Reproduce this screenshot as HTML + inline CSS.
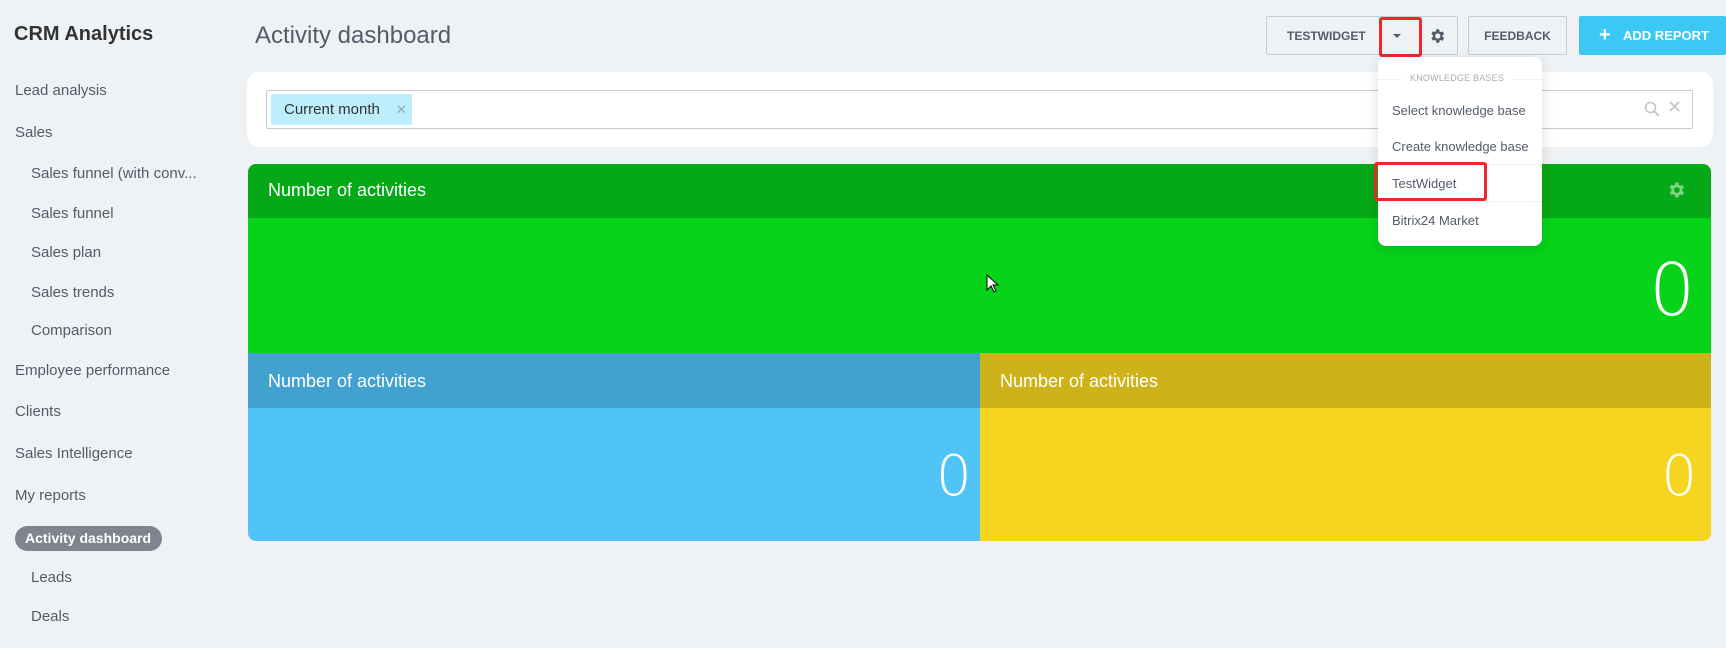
<!DOCTYPE html>
<html><head><meta charset="utf-8"><style>
*{box-sizing:border-box;margin:0;padding:0}
body{width:1726px;height:648px;background:#eef2f4;font-family:"Liberation Sans",sans-serif;position:relative;overflow:hidden;color:#333}
.a{position:absolute}
.nav{position:absolute;left:15px;font-size:15px;color:#535c69;white-space:nowrap}
.sub{left:31px}
.btn{position:absolute;top:16px;height:39px;border:1px solid #c6cdd3;border-radius:2px;font-size:12px;font-weight:bold;color:#535c69;display:flex;align-items:center;justify-content:center}
.item{position:absolute;left:14px;font-size:13px;color:#535c69}
.zero{position:absolute;color:#fff;font-weight:200;font-family:"DejaVu Sans","Liberation Sans",sans-serif}
.hd{position:absolute;color:#fff;font-size:18px}
</style></head><body>
<div class="a" style="left:14px;top:23px;font-size:20px;font-weight:bold;color:#333">CRM Analytics</div>
<div class="nav" style="top:82px">Lead analysis</div>
<div class="nav" style="top:124px">Sales</div>
<div class="nav sub" style="top:165px">Sales funnel (with conv...</div>
<div class="nav sub" style="top:205px">Sales funnel</div>
<div class="nav sub" style="top:244px">Sales plan</div>
<div class="nav sub" style="top:284px">Sales trends</div>
<div class="nav sub" style="top:322px">Comparison</div>
<div class="nav" style="top:362px">Employee performance</div>
<div class="nav" style="top:403px">Clients</div>
<div class="nav" style="top:445px">Sales Intelligence</div>
<div class="nav" style="top:487px">My reports</div>
<div class="a" style="left:15px;top:526px;width:147px;height:25px;border-radius:13px;background:#7f858e;color:#fff;font-weight:bold;font-size:14px;line-height:25px;padding-left:10px;white-space:nowrap">Activity dashboard</div>
<div class="nav sub" style="top:569px">Leads</div>
<div class="nav sub" style="top:608px">Deals</div>

<div class="a" style="left:255px;top:22px;font-size:24px;font-weight:300;color:#535c69">Activity dashboard</div>

<div class="btn" style="left:1266px;width:192px;justify-content:flex-start;padding-left:20px">TESTWIDGET</div>
<div class="a" style="left:1393px;top:34px;width:0;height:0;border-left:4px solid transparent;border-right:4px solid transparent;border-top:4px solid #535c69"></div>
<div class="a" style="left:1379px;top:17px;width:43px;height:40px;border:3px solid #f0262d;border-radius:3px"></div>
<svg class="a" style="left:1428px;top:27px" width="18" height="18" viewBox="0 0 24 24"><path fill="#535c69" d="M19.4 13a7.5 7.5 0 0 0 0-2l2.1-1.6-2-3.5-2.5 1a7 7 0 0 0-1.7-1L15 3h-4l-.4 2.7a7 7 0 0 0-1.7 1l-2.5-1-2 3.5L6.6 11a7.5 7.5 0 0 0 0 2l-2.1 1.6 2 3.5 2.5-1a7 7 0 0 0 1.7 1L11 21h4l.4-2.7a7 7 0 0 0 1.7-1l2.5 1 2-3.5zM13 15.5a3.5 3.5 0 1 1 0-7 3.5 3.5 0 0 1 0 7z"/></svg>
<div class="btn" style="left:1468px;width:99px">FEEDBACK</div>
<div class="btn" style="left:1579px;width:147px;border:none;background:#3bc8f5;color:#fff;font-size:13px;justify-content:flex-start;padding-left:44px">ADD REPORT</div>
<div class="a" style="left:1599px;top:28px;color:#fff;font-size:20px;font-weight:bold;line-height:14px">+</div>

<div class="a" style="left:247px;top:72px;width:1466px;height:75px;background:#fff;border-radius:12px"></div>
<div class="a" style="left:266px;top:90px;width:1427px;height:39px;border:1px solid #c6cdd3;border-radius:2px"></div>
<div class="a" style="left:271px;top:94px;width:141px;height:31px;background:#bdeefb;border-radius:2px;font-size:15px;color:#333;line-height:31px;padding-left:13px">Current month<span style="color:#9aaab2;font-size:13px;margin-left:16px">✕</span></div>
<svg class="a" style="left:1644px;top:101px" width="16" height="16" viewBox="0 0 16 16"><circle cx="6.5" cy="6.5" r="5" stroke="#c0c6cb" stroke-width="1.6" fill="none"/><path d="M10 10l5 5" stroke="#c0c6cb" stroke-width="1.8"/></svg>
<div class="a" style="left:1667px;top:97px;color:#c0c6cb;font-size:18px">✕</div>

<div class="a" style="left:248px;top:164px;width:1463px;height:377px;border-radius:8px;overflow:hidden">
<div class="a" style="left:0;top:0;width:1463px;height:54px;background:#05a816"></div>
<div class="a" style="left:0;top:54px;width:1463px;height:135px;background:#07d31a"></div>
<div class="a" style="left:0;top:189px;width:732px;height:55px;background:#42a2cf"></div>
<div class="a" style="left:0;top:244px;width:732px;height:133px;background:#50c3f7"></div>
<div class="a" style="left:732px;top:189px;width:731px;height:55px;background:#cdb21a"></div>
<div class="a" style="left:732px;top:244px;width:731px;height:133px;background:#f6d520"></div>
<div class="hd" style="left:20px;top:16px">Number of activities</div>
<div class="hd" style="left:20px;top:207px">Number of activities</div>
<div class="hd" style="left:752px;top:207px">Number of activities</div>
<div class="zero" style="right:16px;top:86px;font-size:72px;line-height:80px">0</div>
<div class="zero" style="left:688px;top:280px;font-size:56px;line-height:66px">0</div>
<div class="zero" style="right:14px;top:280px;font-size:56px;line-height:66px">0</div>
<svg class="a" style="left:1418px;top:16px" width="20" height="20" viewBox="0 0 24 24"><path fill="#7dd67f" d="M19.4 13a7.5 7.5 0 0 0 0-2l2.1-1.6-2-3.5-2.5 1a7 7 0 0 0-1.7-1L15 3h-4l-.4 2.7a7 7 0 0 0-1.7 1l-2.5-1-2 3.5L6.6 11a7.5 7.5 0 0 0 0 2l-2.1 1.6 2 3.5 2.5-1a7 7 0 0 0 1.7 1L11 21h4l.4-2.7a7 7 0 0 0 1.7-1l2.5 1 2-3.5zM13 15.5a3.5 3.5 0 1 1 0-7 3.5 3.5 0 0 1 0 7z"/></svg>
</div>
<svg class="a" style="left:986px;top:274px" width="14" height="20" viewBox="0 0 14 20"><path d="M1 1v15l4-4 3 6 2-1-3-6h5z" fill="#fff" stroke="#000" stroke-width="1"/></svg>

<div class="a" style="left:1378px;top:57px;width:164px;height:189px;background:#fff;border-radius:8px;box-shadow:0 4px 14px rgba(0,0,0,.12)">
<div class="a" style="left:0;top:22px;width:164px;height:1px;background:#eef0f2"></div>
<div class="a" style="left:24px;top:16px;background:#fff;padding:0 8px;font-size:9px;color:#a8adb4;letter-spacing:.2px">KNOWLEDGE BASES</div>
<div class="item" style="top:46px">Select knowledge base</div>
<div class="item" style="top:82px">Create knowledge base</div>
<div class="a" style="left:0;top:107px;width:164px;height:1px;background:#eef0f2"></div>
<div class="item" style="top:119px">TestWidget</div>
<div class="a" style="left:0;top:144px;width:164px;height:1px;background:#eef0f2"></div>
<div class="item" style="top:156px">Bitrix24 Market</div>
</div>
<div class="a" style="left:1374px;top:162px;width:113px;height:39px;border:3px solid #f0262d;border-radius:3px"></div>
</body></html>
